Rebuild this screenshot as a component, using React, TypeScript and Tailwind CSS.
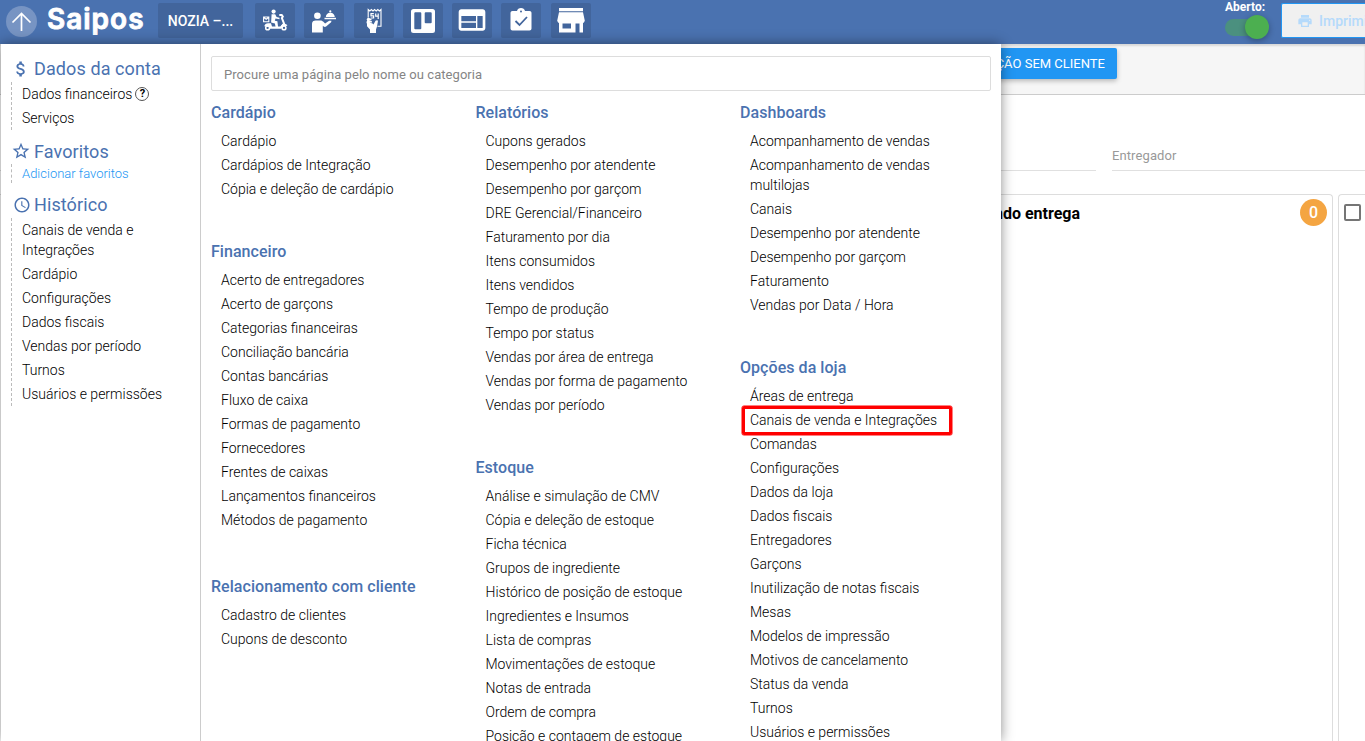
/**
 * App — store back office with the main navigation menu open.
 * The order board sits underneath; the menu covers most of it.
 */

import type { ReactNode } from "react";
import { MdAccessTime, MdAttachMoney, MdPrint, MdStarBorder, MdWeb } from "react-icons/md";

interface Section {
    title: string;
    items: string[];
    className?: string;
}

const COLUMNS: Section[][] = [
    [
        { title: "Cardápio", items: ["Cardápio", "Cardápios de Integração", "Cópia e deleção de cardápio"] },
        {
            title: "Financeiro",
            className: "mb-[42px]",
            items: [
                "Acerto de entregadores",
                "Acerto de garçons",
                "Categorias financeiras",
                "Conciliação bancária",
                "Contas bancárias",
                "Fluxo de caixa",
                "Formas de pagamento",
                "Fornecedores",
                "Frentes de caixas",
                "Lançamentos financeiros",
                "Métodos de pagamento",
            ],
        },
        { title: "Relacionamento com cliente", items: ["Cadastro de clientes", "Cupons de desconto"] },
    ],
    [
        {
            title: "Relatórios",
            items: [
                "Cupons gerados",
                "Desempenho por atendente",
                "Desempenho por garçom",
                "DRE Gerencial/Financeiro",
                "Faturamento por dia",
                "Itens consumidos",
                "Itens vendidos",
                "Tempo de produção",
                "Tempo por status",
                "Vendas por área de entrega",
                "Vendas por forma de pagamento",
                "Vendas por período",
            ],
        },
        {
            title: "Estoque",
            items: [
                "Análise e simulação de CMV",
                "Cópia e deleção de estoque",
                "Ficha técnica",
                "Grupos de ingrediente",
                "Histórico de posição de estoque",
                "Ingredientes e Insumos",
                "Lista de compras",
                "Movimentações de estoque",
                "Notas de entrada",
                "Ordem de compra",
                "Posição e contagem de estoque",
            ],
        },
    ],
    [
        {
            title: "Dashboards",
            items: [
                "Acompanhamento de vendas",
                "Acompanhamento de vendas multilojas",
                "Canais",
                "Desempenho por atendente",
                "Desempenho por garçom",
                "Faturamento",
                "Vendas por Data / Hora",
            ],
        },
        {
            title: "Opções da loja",
            items: [
                "Áreas de entrega",
                "Canais de venda e Integrações",
                "Comandas",
                "Configurações",
                "Dados da loja",
                "Dados fiscais",
                "Entregadores",
                "Garçons",
                "Inutilização de notas fiscais",
                "Mesas",
                "Modelos de impressão",
                "Motivos de cancelamento",
                "Status da venda",
                "Turnos",
                "Usuários e permissões",
            ],
        },
    ],
];

const HISTORY = [
    "Canais de venda e Integrações",
    "Cardápio",
    "Configurações",
    "Dados fiscais",
    "Vendas por período",
    "Turnos",
    "Usuários e permissões",
];

const HIGHLIGHTED = "Canais de venda e Integrações";

/* ===== Header icons ===== */

function ScooterIcon() {
    return (
        <svg width="26" height="24" viewBox="0 0 26 24" fill="none" stroke="#fff" className="-mt-[2px]">
            <circle cx="11.6" cy="3.6" r="2.1" fill="#fff" stroke="none" />
            <path d="M9.6 6.3h3.6l1.4 2.6 2.9.9v1.4l-4-.6-.7 2.2 2.6.4.8 6.8h-2.4l-.9-4.6-3.8-1z" fill="#fff" stroke="none" />
            <path d="M17.3 7h2.4l1.1 1.6-.9 1.5 2.2 5.6-3 3.4" strokeWidth="2" />
            <path d="M2.3 18.3c.4-2 1.8-3 3.7-3h3l1 3.3h8.5l2-2.6c2.6-.5 4.2.2 4.9 1.7l-4 .6-2.2 2.5H7.8v-1.600z" fill="#fff" stroke="none" />
            <path d="M1.6 9h5.2v4.700H1.600zM1.600 9.300l2.600 2 2.600-2" strokeWidth="1.100" />
            <circle cx="5.600" cy="19.900" r="1.900" strokeWidth="1.500" />
            <circle cx="22" cy="19.900" r="1.900" strokeWidth="1.500" />
        </svg>
    );
}

function WaiterIcon() {
    return (
        <svg width="26" height="24" viewBox="0 0 26 24" fill="#fff">
            <circle cx="6.400" cy="6.800" r="3.300" />
            <path d="M1 23.500v-8.700C1 12.600 2.400 11.400 4.800 11.400h4.500c1.200 0 2 .4 2.800 1.200l2 2 4-2.800h2.400l-.4 1.400-5 4.300c-.8.6-1.700.6-2.400 0l-.9-.8v6.800z" />
            <path d="M13.500 8.800h11.500v1.400h-11.500zM14.800 8c.2-2.600 1.800-4.200 4.500-4.200s4.300 1.600 4.500 4.200z" />
            <circle cx="19.300" cy="2.400" r="1.100" />
        </svg>
    );
}

function ReceiptIcon() {
    return (
        <svg width="18" height="26" viewBox="0 0 18 26" fill="#fff">
            <path d="M3.2 9.5V1.5l1.6 1.4L6.4 1.5 8 2.9l1.6-1.4 1.6 1.4 1.6-1.4 1.6 1.4L16 1.5v16.8h-3.5" fill="none" stroke="#fff" strokeWidth="1.1" />
            <path d="M8.8 5.6H6v2.2h2.6V10H5.8M10.7 5.4v2.8h3M13.2 5.4V11" fill="none" stroke="#fff" strokeWidth="1.2" />
            <path d="M3 9.5 6.5 11v1.2L4 12.6l3 .6v1.3l-2.5.1 3 .9 1 1 2-3.8c1.2-1 2.6-.6 2.4.8L12 18.5l-1 3V25H5v-3.5L2 18.3V16L1.4 14l.8-1.3-.6-1.5z" />
        </svg>
    );
}

function BoardIcon() {
    return (
        <svg width="24" height="24" viewBox="0 0 24 24" fill="#fff" fillRule="evenodd">
            <path d="M2.5 0h19A2.5 2.5 0 0 1 24 2.5v19a2.5 2.5 0 0 1-2.5 2.5h-19A2.5 2.5 0 0 1 0 21.5V2.5A2.5 2.5 0 0 1 2.5 0zM4.3 3.2a1 1 0 0 0-1 1v15a1 1 0 0 0 1 1h5a1 1 0 0 0 1-1v-15a1 1 0 0 0-1-1zM14.7 3.2a1 1 0 0 0-1 1v9a1 1 0 0 0 1 1h5a1 1 0 0 0 1-1v-9a1 1 0 0 0-1-1z" />
        </svg>
    );
}

function ChecklistIcon() {
    return (
        <svg width="22" height="24" viewBox="0 0 22 24" className="-mt-[2px]">
            <path d="M2.5 3H7c.4-1.7 2-3 4-3s3.6 1.3 4 3h4.5C20.8 3 21.5 3.8 21.5 5v15.5c0 1.2-.8 2-2 2h-17c-1.2 0-2-.8-2-2V5c0-1.2.8-2 2-2z" fill="#fff" />
            <circle cx="11" cy="3.5" r="1" fill="#42659c" />
            <path d="m5.5 13 4 4 7.5-8" fill="none" stroke="#42659c" strokeWidth="1.8" />
        </svg>
    );
}

function StoreIcon() {
    return (
        <svg width="28" height="25" viewBox="0 0 28 25" fill="#fff" fillRule="evenodd">
            <path d="M2 0h24v3.2H2zM2 4.2h24l1.800 8.600-1 2H26V24.500h-3.500V15.500h-4V24.500H2V14.800H1.200l-1-2zM5.500 15.500v5h8.500v-5z" />
        </svg>
    );
}

function NavButton({ children }: { children: ReactNode }) {
    return (
        <button className="flex h-[35px] w-10 shrink-0 items-center justify-center rounded-[2px] bg-[#42659c]">
            {children}
        </button>
    );
}

function Header() {
    return (
        <header className="flex h-11 items-start bg-[#4a72b0] text-white">
            <div className="mt-[6px] ml-[6px] flex size-[31px] shrink-0 items-center justify-center rounded-full bg-[#7794c3]">
                <svg width="21" height="20" viewBox="0 0 21 20" fill="none" stroke="#fff" strokeWidth="1.7">
                    <path d="M10.5 19V1.5M1.5 10.5l9-9 9 9" />
                </svg>
            </div>

            <div className="ml-[10px] w-[111px] shrink-0 font-['Inter'] text-[28px] leading-[39px] font-semibold tracking-[1px] [-webkit-text-stroke:0.9px_white]">
                Saipos
            </div>

            <div className="mt-[3px] flex">
                <button className="h-[35px] w-[85px] shrink-0 rounded-[2px] bg-[#42659c] text-sm font-medium">NOZIA –...</button>
                <div className="ml-3 flex gap-[9.3px]">
                    <NavButton><ScooterIcon /></NavButton>
                    <NavButton><WaiterIcon /></NavButton>
                    <NavButton><ReceiptIcon /></NavButton>
                    <NavButton><BoardIcon /></NavButton>
                    <NavButton><MdWeb size={32} className="-mt-[2px]" /></NavButton>
                    <NavButton><ChecklistIcon /></NavButton>
                    <NavButton><StoreIcon /></NavButton>
                </div>
            </div>

            {/* ===== Store open switch ===== */}
            <div className="ml-auto w-[57px] shrink-0">
                <p className="text-xs leading-[14px] font-bold">Aberto:</p>
                <div className="mt-[1px] flex h-6 w-11 items-center">
                    <div className="flex h-[17px] w-10 items-center rounded-full bg-[#4b907f]">
                        <div className="ml-5 size-6 shrink-0 rounded-full bg-[#4caf50] shadow-[0_2px_6px_rgba(0,0,0,0.3)]" />
                    </div>
                </div>
            </div>
            <button className="mt-[3px] -ml-px flex h-[35px] w-[84px] shrink-0 items-center gap-[6px] overflow-hidden rounded-l-[2px] border border-r-0 border-[#2196f3] bg-[#f0f0f0] pl-[15px] text-sm font-medium text-[#b5dafb]">
                <MdPrint size={16} className="shrink-0" />
                <span>Imprimir</span>
            </button>
        </header>
    );
}

/* ===== Order board, mostly hidden by the menu ===== */
function OrderBoard() {
    return (
        <div className="flex h-full flex-col">
            <div className="flex h-[51px] shrink-0 items-start border-b border-[#ccc] bg-[#f6f6f6] pt-1 shadow-[inset_0_2px_2px_rgba(0,0,0,0.12)]">
                <button className="ml-[900px] flex h-[31px] w-[217px] items-center justify-end rounded-[2px] bg-[#2196f3] pr-3 text-[13px] whitespace-nowrap text-white shadow-[0_2px_5px_rgba(0,0,0,0.26)]">
                    SIMULAÇÃO SEM CLIENTE
                </button>
            </div>
            <div className="flex h-[76px] shrink-0 gap-4">
                <div className="w-[1096px] shrink-0 border-b border-[#e0e0e0]" />
                <div className="flex flex-1 items-end border-b border-[#e0e0e0] pb-[5px] text-[13px] tracking-[0.1px] text-[#999]">Entregador</div>
            </div>
            <div className="mt-[23px] flex flex-1 gap-[5px]">
                <div className="flex w-[1333px] shrink-0 items-start justify-end rounded-tr border-t border-r border-[#ddd] pt-1 pr-[5px]">
                    <h3 className="mr-[220px] text-base leading-[29px] font-bold text-black">Aguardando entrega</h3>
                    <span className="flex size-[27px] items-center justify-center rounded-full bg-[#f4a542] text-base font-medium text-white">0</span>
                </div>
                <div className="w-[60px] shrink-0 rounded-tl border-t border-l border-[#ddd] pt-[9px] pl-[5px]">
                    <div className="size-[17px] rounded-[2px] border-2 border-[#757575]" />
                </div>
            </div>
        </div>
    );
}

function SideHeading({ icon, children }: { icon: ReactNode; children: ReactNode }) {
    return (
        <h2 className="flex h-[27px] items-center pl-[10px] text-[18px] font-normal tracking-[0.1px] text-[#4a72b0]">
            <span className="flex w-[23px] shrink-0">{icon}</span>
            {children}
        </h2>
    );
}

/* ===== Left column of the menu ===== */
function MenuSidebar() {
    return (
        <aside className="w-[200px] shrink-0 border-r border-[#ccc] pt-[11px]">
            <SideHeading icon={<MdAttachMoney size={20} />}>Dados da conta</SideHeading>
            <ul className="ml-[10px] border-l border-dashed border-[#bbb] pl-[10px]">
                <li className="flex items-center gap-[3px] py-[2px]">
                    Dados financeiros
                    <span className="flex size-[14px] items-center justify-center rounded-full border border-[#555] text-[11px] font-bold">?</span>
                </li>
                <li className="py-[2px]">Serviços</li>
            </ul>

            <div className="mt-2">
                <SideHeading icon={<MdStarBorder size={20} className="-mt-px" />}>Favoritos</SideHeading>
                <div className="-mt-px ml-[10px] border-l border-dashed border-[#bbb] pl-[10px] text-[13px] leading-[19px] text-[#2196f3]">
                    Adicionar favoritos
                </div>
            </div>

            <div className="mt-2">
                <SideHeading icon={<MdAccessTime size={18} className="ml-[2px]" />}>Histórico</SideHeading>
                <ul className="ml-[10px] border-l border-dashed border-[#bbb] pr-6 pl-[10px]">
                    {HISTORY.map((item) => (
                        <li key={item} className="py-[2px]">{item}</li>
                    ))}
                </ul>
            </div>
        </aside>
    );
}

function MenuSection({ title, items, className = "mb-[38px]" }: Section) {
    return (
        <section className={className}>
            <h3 className="h-[29px] text-base leading-[26px] font-medium tracking-[0.05px] text-[#4a72b0]">{title}</h3>
            <ul className="pl-[10px]">
                {items.map((item) => (
                    <li key={item} className="relative w-[215px] py-[2px]">
                        {item}
                        {item === HIGHLIGHTED && (
                            <span className="absolute -top-[2px] -left-[8px] h-[29px] w-[210px] rounded-[2px] border-[3px] border-[#ff0000] ring-[0.5px] ring-[#ff0000]" />
                        )}
                    </li>
                ))}
            </ul>
        </section>
    );
}

function MainMenu() {
    return (
        <nav className="absolute top-0 left-px flex h-full w-[1000px] bg-white text-sm leading-5 font-light text-black shadow-[0_0_12px_rgba(0,0,0,0.45)]">
            <MenuSidebar />
            <div className="flex-1 overflow-hidden px-[10px] pt-3">
                <input
                    className="block h-[35px] w-full rounded-[2px] border border-[#ddd] px-3 pt-[2px] text-[13px] font-normal tracking-[0.06px] placeholder:text-[#858585]"
                    placeholder="Procure uma página pelo nome ou categoria"
                />
                <div className="mt-[9px] grid grid-cols-[264.5px_264.5px_250px]">
                    {COLUMNS.map((sections, i) => (
                        <div key={i}>
                            {sections.map((section) => (
                                <MenuSection key={section.title} {...section} />
                            ))}
                        </div>
                    ))}
                </div>
            </div>
        </nav>
    );
}

export default function App() {
    return (
        <div className="h-[741px] w-[1365px] overflow-hidden bg-white font-['Roboto','Liberation_Sans',sans-serif]">
            <Header />
            <main className="relative h-[697px]">
                <OrderBoard />
                <MainMenu />
            </main>
        </div>
    );
}
